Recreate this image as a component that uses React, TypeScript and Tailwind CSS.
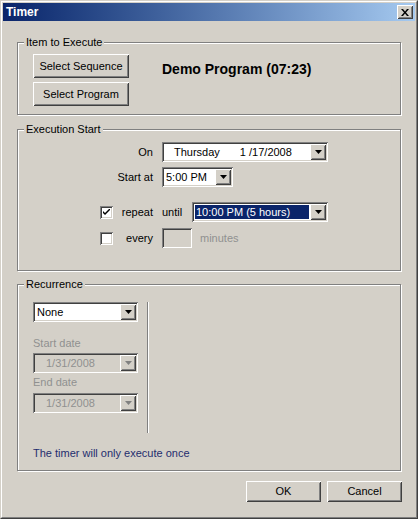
import React from "react";

const raised =
  "shadow-[inset_1px_1px_0_#ffffff,inset_-1px_-1px_0_#404040,inset_2px_2px_0_#d4d0c8,inset_-2px_-2px_0_#808080]";
const sunken =
  "shadow-[inset_1px_1px_0_#808080,inset_-1px_-1px_0_#ffffff,inset_2px_2px_0_#404040,inset_-2px_-2px_0_#d4d0c8]";

function Button({ label, className }: { label: string; className: string }) {
  return (
    <button type="button" className={["flex items-center justify-center bg-[#d4d0c8] text-black", raised, className].join(" ")}>
      {label}
    </button>
  );
}

function ArrowButton({ disabled }: { disabled?: boolean }) {
  return (
    <span className={["flex w-[16px] shrink-0 items-center justify-center bg-[#d4d0c8]", raised].join(" ")}>
      <svg width="7" height="4" viewBox="0 0 7 4">
        <polygon points="0,0 7,0 3.5,4" fill={disabled ? "#808080" : "#000000"} />
      </svg>
    </span>
  );
}

type ComboProps = {
  width: string;
  children: React.ReactNode;
  selected?: boolean;
  disabled?: boolean;
};

function Combo({ width, children, selected, disabled }: ComboProps) {
  return (
    <div className={["flex h-[20px] p-[2px]", width, sunken, disabled ? "bg-[#d4d0c8]" : "bg-white"].join(" ")}>
      <div className="flex min-w-0 flex-1 items-stretch p-[1px]">
        <div
          className={[
            "flex flex-1 items-center whitespace-nowrap px-[1px]",
            selected ? "bg-[#0a246a] text-white" : disabled ? "text-[#909090]" : "text-black",
          ].join(" ")}
        >
          {children}
        </div>
      </div>
      <ArrowButton disabled={disabled} />
    </div>
  );
}

function CheckBox({ checked }: { checked?: boolean }) {
  return (
    <span className={["flex h-[13px] w-[13px] shrink-0 items-center justify-center bg-white", sunken].join(" ")}>
      {checked ? (
        <svg width="7" height="7" viewBox="0 0 7 7">
          <path d="M0 2 L2 4 L7 -1 L7 1 L2 6 L0 4 Z" fill="#000000" />
        </svg>
      ) : null}
    </span>
  );
}

function GroupBox({ title, className, children }: { title: string; className: string; children: React.ReactNode }) {
  return (
    <div
      className={[
        "relative mx-[14px] border border-[#808080] shadow-[1px_1px_0_#ffffff,inset_1px_1px_0_#ffffff]",
        className,
      ].join(" ")}
    >
      <span className="absolute left-[6px] top-[-7px] bg-[#d4d0c8] px-[2px] leading-[13px]">{title}</span>
      {children}
    </div>
  );
}

export default function App() {
  return (
    <div className="h-[519px] w-[418px] border border-b-[#404040] border-l-[#d4d0c8] border-r-[#404040] border-t-[#d4d0c8] bg-[#d4d0c8] font-['Liberation_Sans',Arial,sans-serif] text-[11px] leading-[13px] text-black">
      <div className="flex h-full flex-col border border-b-[#808080] border-l-white border-r-[#808080] border-t-white p-[1px]">
        {/* title bar */}
        <div className="flex h-[18px] shrink-0 items-center justify-between bg-gradient-to-r from-[#0a246a] to-[#a6caf0] pl-[3px] pr-[2px]">
          <span className="text-[12px] font-bold text-white">Timer</span>
          <span className={["flex h-[14px] w-[16px] items-center justify-center bg-[#d4d0c8]", raised].join(" ")}>
            <svg width="8" height="7" viewBox="0 0 8 7">
              <path d="M0 0 L2 0 L4 2.5 L6 0 L8 0 L5 3.5 L8 7 L6 7 L4 4.5 L2 7 L0 7 L3 3.5 Z" fill="#000000" />
            </svg>
          </span>
        </div>

        {/* Item to Execute */}
        <GroupBox title="Item to Execute" className="mt-[21px] h-[73px]">
          <div className="flex pl-[15px] pt-[11px]">
            <div className="flex flex-col gap-[4px]">
              <Button label="Select Sequence" className="h-[24px] w-[96px]" />
              <Button label="Select Program" className="h-[24px] w-[96px]" />
            </div>
            <div className="ml-[33px] mt-[7px] text-[14px] font-bold leading-[16px]">Demo Program (07:23)</div>
          </div>
        </GroupBox>

        {/* Execution Start */}
        <GroupBox title="Execution Start" className="mt-[14px] h-[142px]">
          <div className="flex flex-col pt-[12px]">
            <div className="flex h-[20px] items-center gap-[9px]">
              <span className="w-[135px] text-right">On</span>
              <Combo width="w-[166px]">
                <span className="ml-[8px]">Thursday</span>
                <span className="ml-[20px]">1 /17/2008</span>
              </Combo>
            </div>
            <div className="mt-[5px] flex h-[20px] items-center gap-[9px]">
              <span className="w-[135px] text-right">Start at</span>
              <Combo width="w-[71px]">5:00 PM</Combo>
            </div>
            <div className="mt-[15px] flex h-[20px] items-center gap-[9px]">
              <span className="flex w-[135px] items-center pl-[82px]">
                <CheckBox checked />
                <span className="flex-1 text-right">repeat</span>
              </span>
              <span className="w-[21px]">until</span>
              <Combo width="w-[136px]" selected>
                10:00 PM (5 hours)
              </Combo>
            </div>
            <div className="mt-[6px] flex h-[20px] items-center gap-[9px]">
              <span className="flex w-[135px] items-center pl-[82px]">
                <CheckBox />
                <span className="flex-1 text-right">every</span>
              </span>
              <span className={["h-[20px] w-[30px] bg-[#d4d0c8]", sunken].join(" ")} />
              <span className="-ml-[1px] text-[#909090]">minutes</span>
            </div>
          </div>
        </GroupBox>

        {/* Recurrence */}
        <GroupBox title="Recurrence" className="mt-[13px] h-[187px]">
          <div className="flex flex-col pl-[15px] pt-[17px]">
            <div className="flex h-[131px]">
              <div className="flex w-[105px] flex-col">
                <Combo width="w-[105px]">None</Combo>
                <span className="mt-[15px] text-[#909090]">Start date</span>
                <div className="mt-[3px]">
                  <Combo width="w-[105px]" disabled>
                    <span className="ml-[9px]">1/31/2008</span>
                  </Combo>
                </div>
                <span className="mt-[3px] text-[#909090]">End date</span>
                <div className="mt-[4px]">
                  <Combo width="w-[105px]" disabled>
                    <span className="ml-[9px]">1/31/2008</span>
                  </Combo>
                </div>
              </div>
              <div className="ml-[9px] w-[2px] border-l border-r border-l-[#808080] border-r-white" />
            </div>
            <span className="mt-[14px] text-[#1f2d6e]">The timer will only execute once</span>
          </div>
        </GroupBox>

        {/* footer buttons */}
        <div className="mr-[13px] mt-[10px] flex justify-end gap-[6px]">
          <Button label="OK" className="h-[21px] w-[75px]" />
          <Button label="Cancel" className="h-[21px] w-[75px]" />
        </div>
      </div>
    </div>
  );
}
